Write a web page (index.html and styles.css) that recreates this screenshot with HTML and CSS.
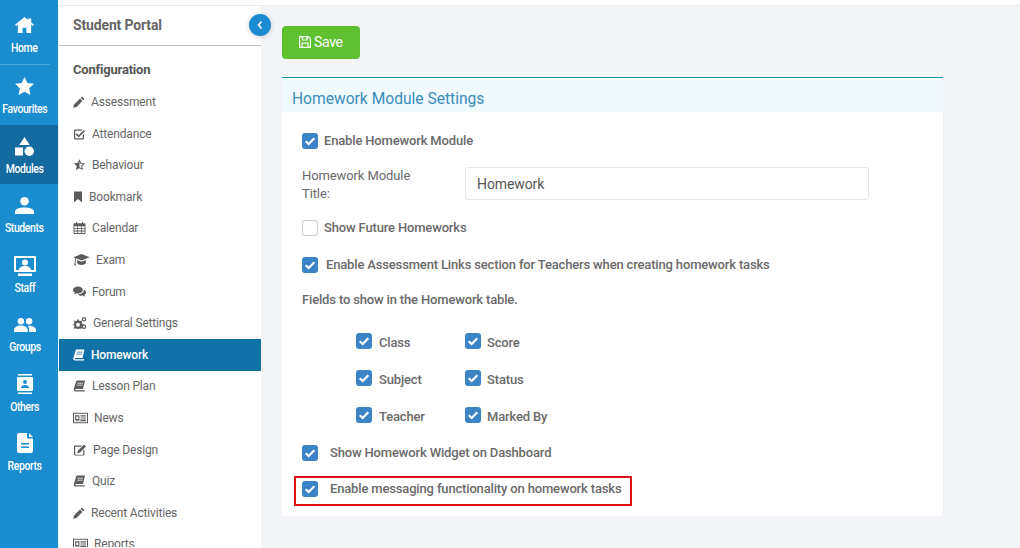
FILE: index.html
```html
<!DOCTYPE html>
<html lang="en">
<head>
<meta charset="utf-8">
<title>Homework Module Settings</title>
<link rel="stylesheet" href="styles.css">
</head>
<body>
<svg class="defs" width="0" height="0" aria-hidden="true">
  <symbol id="r-home" viewBox="0 0 20 17" preserveAspectRatio="none"><path d="M10 0 0 8.200l1.200 1.400L3 8.100V17h5v-5.500h4V17h5V8.100l1.800 1.500L20 8.200 17 5.700V1.500h-3v1.700z"/></symbol>
  <symbol id="r-star" viewBox="0 0 20 19" preserveAspectRatio="none"><path d="m10 0 3 6.300 7 .9-5.100 4.800 1.300 6.900-6.200-3.400-6.200 3.400L5.100 12 0 7.200l7-.9z"/></symbol>
  <symbol id="r-shapes" viewBox="0 0 20 20" preserveAspectRatio="none"><path d="M10 0l5.500 8.500h-11z"/><rect x="0" y="11" width="8.500" height="8.500"/><circle cx="15" cy="15" r="5"/></symbol>
  <symbol id="r-user" viewBox="0 0 20 18" preserveAspectRatio="none"><circle cx="10" cy="4.500" r="4.500"/><path d="M0 18v-2.500C0 12.500 4.500 11 10 11s10 1.500 10 4.500V18z"/></symbol>
  <symbol id="r-staff" viewBox="0 0 22 20" preserveAspectRatio="none"><path fill-rule="evenodd" d="M1 0h20a1 1 0 0 1 1 1v14a1 1 0 0 1-1 1H1a1 1 0 0 1-1-1V1a1 1 0 0 1 1-1zm1 2v12h18V2z"/><circle cx="11" cy="6.500" r="3"/><path d="M5 14c0-3 3-4 6-4s6 1 6 4zM4 17.500h14V20H4z"/></symbol>
  <symbol id="r-users" viewBox="0 0 24 15" preserveAspectRatio="none"><circle cx="7.500" cy="3.500" r="3.500"/><circle cx="16.500" cy="3.500" r="3.500"/><path d="M0 15v-2c0-3 3.500-5 7.500-5s7.500 2 7.500 5v2zM16.500 15v-2.500c0-1.500-.6-2.800-1.700-3.800.6-.3 1.200-.4 1.900-.4 4 0 7.300 2 7.300 4.700v2z"/></symbol>
  <symbol id="r-contact" viewBox="0 0 16 20" preserveAspectRatio="none"><path fill-rule="evenodd" d="M1 0h14v1.500H1zM1 18.500h14V20H1zM1 3h14a1 1 0 0 1 1 1v12a1 1 0 0 1-1 1H1a1 1 0 0 1-1-1V4a1 1 0 0 1 1-1zm7 3a2 2 0 1 0 0 4 2 2 0 0 0 0-4zm-4 8h8c0-2-2-3-4-3s-4 1-4 3z"/></symbol>
  <symbol id="r-file" viewBox="0 0 16 20" preserveAspectRatio="none"><path fill-rule="evenodd" d="M2 0h8v5.500h6V18a2 2 0 0 1-2 2H2a2 2 0 0 1-2-2V2a2 2 0 0 1 2-2zm10 0 4 4h-4zM4 10v1.500h8V10zm0 3.500V15h8v-1.500z"/></symbol>
  <symbol id="s-pencil" viewBox="0 0 12 12"><path d="M9 .6 11.400 3l-1.300 1.300-2.400-2.400zM7 2.600 9.400 5 3.500 10.900.2 11.800l.9-3.300z"/></symbol>
  <symbol id="s-check" viewBox="0 0 12 12"><path fill-rule="evenodd" d="M1.500 1.500h7.700L8 2.700H1.700v7.600h7.600V7.200l1.200-1.200v4.500a1 1 0 0 1-1 1h-8a1 1 0 0 1-1-1v-8a1 1 0 0 1 1-1z"/><path d="M3.200 5.200 5.200 7.200 10.300 2l1.200 1.300-6.300 6.300L2 6.400z"/></symbol>
  <symbol id="s-star" viewBox="0 0 12 12"><path fill-rule="evenodd" d="M6 .3 7.700 3.800l3.900.6-2.800 2.700.7 3.900L6 9.200 2.500 11l.7-3.900L.4 4.400l3.900-.6zM6 2.800v5.400l2.200 1.100-.4-2.500 1.800-1.700-2.400-.4z"/></symbol>
  <symbol id="s-bookmark" viewBox="0 0 9 12"><path d="M.5.500h8v11L4.500 8 .5 11.500z"/></symbol>
  <symbol id="s-cal" viewBox="0 0 12 12"><path fill-rule="evenodd" d="M2.500 0h1v1.200h5V0h1v1.200h1.500a1 1 0 0 1 1 1V11a1 1 0 0 1-1 1H1a1 1 0 0 1-1-1V2.200a1 1 0 0 1 1-1h1.500zM.9 4.200v1.800h2.700V4.200zm3.500 0v1.800h3.200V4.200zm4 0v1.800h2.700V4.200zM.9 6.800v1.800h2.700V6.800zm3.500 0v1.800h3.200V6.800zm4 0v1.800h2.700V6.800zM.9 9.400v1.700h2.700V9.400zm3.500 0v1.700h3.200V9.400zm4 0v1.700h2.700V9.400z"/></symbol>
  <symbol id="s-cap" viewBox="0 0 15 11"><path d="M7.500 0 15 3 7.500 6 2.500 4 2 7.500l.4 3H.8L1.300 7.500l.4-3.800L0 3z"/><path d="M3.500 5.500 7.500 7l4-1.500V8c0 1-2 2-4 2s-4-1-4-2z"/></symbol>
  <symbol id="s-comments" viewBox="0 0 12 10"><path d="M4.700 0C7 0 9 1.300 9 3.200S7 6.400 4.700 6.400c-.5 0-.9 0-1.300-.2L1 7.300l.7-1.800C.6 4.900 0 4.100 0 3.200 0 1.300 2 0 4.700 0z"/><path d="M10 2.800c1.200.6 2 1.500 2 2.600 0 .9-.6 1.700-1.400 2.200l.6 1.700-2.200-1c-1.800.4-3.600-.1-4.500-1 3.300 0 6-1.800 5.500-4.500z"/></symbol>
  <symbol id="s-cogs" viewBox="0 0 13 12"><path fill-rule="evenodd" d="M3.700 2.500h1.600l.3 1.200.9.400 1.100-.6 1.100 1.100-.6 1.100.4.900 1.200.3v1.600l-1.200.3-.4.9.6 1.100-1.100 1.100-1.100-.6-.9.400-.3 1.100H3.700l-.3-1.100-.9-.4-1.100.6L.3 10.800l.6-1.100-.4-.9L0 8.500V6.900l.5-.2.4-.9-.6-1.100 1.100-1.100 1.100.6.900-.4zm.8 3.200a2 2 0 1 0 0 4 2 2 0 0 0 0-4z"/><path fill-rule="evenodd" d="M10.500 0a2 2 0 1 1 0 4.500 2 2 0 0 1 0-4.500zm0 1.200a1 1 0 1 0 0 2 1 1 0 0 0 0-2zM10.500 7.500a2 2 0 1 1 0 4.500 2 2 0 0 1 0-4.500zm0 1.200a1 1 0 1 0 0 2 1 1 0 0 0 0-2z"/></symbol>
  <symbol id="s-book" viewBox="0 0 12 12"><path fill-rule="evenodd" d="M3 .5h8.500L9.500 9H2.400c-.7 0-.8 1.300 0 1.300h8.900l-.3 1.200H2c-1.500 0-2-1.400-1.600-3zm1 2.200-.2.8h5.600l.2-.8zm-.4 2-.2.8h5.600l.2-.8z"/></symbol>
  <symbol id="s-news" viewBox="0 0 14 11"><path fill-rule="evenodd" d="M0 .5h14v10H0zm1 1v8h12v-8zM2 3h4v4.500H2zm1 1v2.500h2V4zm4-1h5v1H7zm0 2h5v1H7zm0 2h5v1H7zM2 8h10v.6H2z"/></symbol>
  <symbol id="s-edit" viewBox="0 0 13 12"><path fill-rule="evenodd" d="M1.500 1.500h7L7.300 2.700H1.700v8h8V6.500l1.200-1.200v5.200a1 1 0 0 1-1 1h-8.400a1 1 0 0 1-1-1v-8a1 1 0 0 1 1-1z"/><path d="M10.500.5 12.500 2.500 6.300 8.700 3.800 9.200l.5-2.500z"/></symbol>
  <symbol id="s-save" viewBox="0 0 12 12"><path fill-rule="evenodd" d="M1 0h8.500L12 2.500V11a1 1 0 0 1-1 1H1a1 1 0 0 1-1-1V1a1 1 0 0 1 1-1zm.2 1.200v9.600h1.300V6.500h7v4.300h1.300V3L9 1.200h-.2v3.300H2.800V1.200zm2.500 6.500v3.100h4.600V7.700zM4 1.200v2.200h3.500V1.200z"/></symbol>
  <symbol id="tick" viewBox="0 0 16 16"><path d="M3.700 8.200 6.700 11 12.300 5.200" fill="none" stroke="#fff" stroke-width="2.100"/></symbol>
</svg>

<nav class="rail">
  <a class="rail-item rail-home"><svg class="ri ri-home"><use href="#r-home"/></svg><span>Home</span></a>
  <a class="rail-item"><svg class="ri ri-star"><use href="#r-star"/></svg><span>Favourites</span></a>
  <a class="rail-item is-active"><svg class="ri ri-shapes"><use href="#r-shapes"/></svg><span>Modules</span></a>
  <a class="rail-item"><svg class="ri ri-user"><use href="#r-user"/></svg><span>Students</span></a>
  <a class="rail-item"><svg class="ri ri-staff"><use href="#r-staff"/></svg><span>Staff</span></a>
  <a class="rail-item"><svg class="ri ri-users"><use href="#r-users"/></svg><span>Groups</span></a>
  <a class="rail-item"><svg class="ri ri-contact"><use href="#r-contact"/></svg><span>Others</span></a>
  <a class="rail-item"><svg class="ri ri-contact"><use href="#r-file"/></svg><span>Reports</span></a>
</nav>

<div class="shell">
  <div class="topstrip"></div>
  <div class="columns">
    <aside class="side">
      <div class="side-head">Student Portal</div>
      <button class="collapse" type="button" aria-label="Collapse"><svg viewBox="0 0 8 10" class="chev"><path d="M5.500 1.500 2.500 5l3 3.500" fill="none" stroke="#fff" stroke-width="1.500"/></svg></button>
      <div class="side-title">Configuration</div>
      <ul class="menu">
        <li class="mi"><svg class="si w12"><use href="#s-pencil"/></svg>Assessment</li>
        <li class="mi"><svg class="si w13"><use href="#s-check"/></svg>Attendance</li>
        <li class="mi"><svg class="si w13"><use href="#s-star"/></svg>Behaviour</li>
        <li class="mi"><svg class="si w10"><use href="#s-bookmark"/></svg>Bookmark</li>
        <li class="mi"><svg class="si w13"><use href="#s-cal"/></svg>Calendar</li>
        <li class="mi"><svg class="si w17"><use href="#s-cap"/></svg>Exam</li>
        <li class="mi"><svg class="si w13"><use href="#s-comments"/></svg>Forum</li>
        <li class="mi"><svg class="si w14"><use href="#s-cogs"/></svg>General Settings</li>
        <li class="mi is-on"><svg class="si w12"><use href="#s-book"/></svg>Homework</li>
        <li class="mi"><svg class="si w13"><use href="#s-book"/></svg>Lesson Plan</li>
        <li class="mi"><svg class="si w15"><use href="#s-news"/></svg>News</li>
        <li class="mi"><svg class="si w14"><use href="#s-edit"/></svg>Page Design</li>
        <li class="mi"><svg class="si w13"><use href="#s-book"/></svg>Quiz</li>
        <li class="mi"><svg class="si w12"><use href="#s-pencil"/></svg>Recent Activities</li>
        <li class="mi"><svg class="si w15"><use href="#s-news"/></svg>Reports</li>
      </ul>
    </aside>

    <main class="main">
      <button class="save" type="button"><svg class="save-ico"><use href="#s-save"/></svg>Save</button>
      <section class="panel">
        <h2 class="panel-title">Homework Module Settings</h2>
        <div class="panel-body">
          <label class="check row-a"><span class="box on"><svg><use href="#tick"/></svg></span>Enable Homework Module</label>
          <div class="field">
            <div class="field-label">Homework Module<br>Title:</div>
            <div class="input">Homework</div>
          </div>
          <label class="check row-b"><span class="box"></span>Show Future Homeworks</label>
          <label class="check row-c gap8"><span class="box on"><svg><use href="#tick"/></svg></span>Enable Assessment Links section for Teachers when creating homework tasks</label>
          <div class="fields-title">Fields to show in the Homework table.</div>
          <div class="grid">
            <label class="check cell"><span class="box on up"><svg><use href="#tick"/></svg></span>Class</label>
            <label class="check cell"><span class="box on up"><svg><use href="#tick"/></svg></span>Score</label>
            <label class="check cell"><span class="box on up"><svg><use href="#tick"/></svg></span>Subject</label>
            <label class="check cell"><span class="box on up"><svg><use href="#tick"/></svg></span>Status</label>
            <label class="check cell"><span class="box on up"><svg><use href="#tick"/></svg></span>Teacher</label>
            <label class="check cell"><span class="box on up"><svg><use href="#tick"/></svg></span>Marked By</label>
          </div>
          <label class="check row-d gap12"><span class="box on"><svg><use href="#tick"/></svg></span>Show Homework Widget on Dashboard</label>
          <label class="check highlight gap12"><span class="box on"><svg><use href="#tick"/></svg></span>Enable messaging functionality on homework tasks</label>
        </div>
      </section>
    </main>
  </div>
</div>
</body>
</html>
```

FILE: styles.css
```css
* { box-sizing: border-box; }
html, body { margin: 0; height: 548px; overflow: hidden; }
body { display: flex; font-family: Roboto, "Liberation Sans", sans-serif; background: #f2f4f8; color: #666; }
.defs { position: absolute; }

/* left rail */
.rail { width: 58px; flex: none; height: 548px; background: #1a8cd0; display: flex; flex-direction: column; padding: 5px 0 0; }
.rail-item { height: 59.600px; display: flex; flex-direction: column; align-items: center; justify-content: flex-end; padding: 0 9px 8.700px 0; color: #fff; font-size: 12px; font-weight: 500; letter-spacing: -.45px; line-height: 14px; }
.rail-item span { white-space: nowrap; transform: scaleX(.87); }
.rail-home { height: 60px; padding-bottom: 10px; background: linear-gradient(#4aa6dc, #4aa6dc) no-repeat 0 100% / 50px 1px; }
.is-active { background: #14699f; }
.ri { fill: #fff; display: block; flex: none; }
.ri-home { width: 19px; height: 16px; margin-bottom: 8px; }
.ri-star { width: 19px; height: 18px; margin-bottom: 7px; }
.ri-shapes { width: 19px; height: 19px; margin-bottom: 6px; }
.ri-user { width: 19px; height: 17px; margin-bottom: 7px; }
.ri-staff { width: 22px; height: 20px; margin-bottom: 5px; }
.ri-users { width: 22px; height: 14px; margin-bottom: 8px; }
.ri-contact { width: 16px; height: 20px; margin-bottom: 6px; }

/* shell */
.shell { flex: 1; min-width: 0; display: flex; flex-direction: column; }
.topstrip { height: 6px; background: #fff; border-bottom: 1px solid #e6e8ec; flex: none; }
.columns { display: flex; flex: 1; min-height: 0; }

/* sidebar */
.side { width: 203px; flex: none; background: #fff; position: relative; border-left: 1px solid #e8f8fd; }
.side-head { height: 40px; border-bottom: 1px solid #bdbdbd; padding: 11px 0 0 14px; font-size: 14px; font-weight: 700; line-height: 16px; letter-spacing: -.15px; color: #666; }
.collapse { position: absolute; top: 8px; right: -10px; width: 22px; height: 22px; border: 0; padding: 0; border-radius: 50%; background: #1b8ad0; box-shadow: 0 1px 5px rgba(0,0,0,.2); display: flex; align-items: center; justify-content: center; z-index: 2; }
.chev { width: 8px; height: 10px; }
.side-title { padding: 16px 0 0 14px; font-size: 13px; font-weight: 700; line-height: 16px; letter-spacing: -.2px; color: #555; height: 40.200px; }
.menu { list-style: none; margin: 0; padding: 0; height: 461px; overflow: hidden; }
.mi { height: 31.600px; display: flex; align-items: center; padding-left: 14px; font-size: 12px; letter-spacing: -.17px; color: #666; }
.si { height: 12px; flex: none; margin-right: 6px; fill: #5c5c5c; }
.w10 { width: 10px; } .w12 { width: 12px; } .w13 { width: 13px; } .w14 { width: 14px; } .w15 { width: 15px; } .w17 { width: 17px; }
.is-on { background: #1172a8; color: #fff; font-weight: 500; }
.is-on .si { fill: #fff; }

/* main */
.main { flex: 1; min-width: 0; padding: 20px 77px 0 21px; }
.save { display: flex; align-items: center; width: 78px; height: 33px; border: 0; border-radius: 4px; background: #5fc12f; color: #fff; font: 400 14px Roboto, sans-serif; letter-spacing: -.3px; padding: 0 0 2px 17px; }
.save-ico { width: 12px; height: 12px; fill: #fff; margin-right: 3px; }
.panel { margin-top: 18px; background: #fff; border-top: 1px solid #1d93b0; height: 439px; }
.panel-title { margin: 0; height: 34px; background: #f0f9fd; color: #3a8dbd; font-size: 15.600px; font-weight: 400; line-height: 20px; padding: 11px 0 0 10px; }
.panel-body { padding: 21px 0 0 20px; display: flex; flex-direction: column; align-items: flex-start; }

.check { display: flex; align-items: center; gap: 6px; font-size: 13px; font-weight: 500; color: #6a6a6a; line-height: 16px; letter-spacing: -.16px; white-space: nowrap; }
.gap8 { gap: 8px; }
.gap12 { gap: 12px; }
.box { width: 16px; height: 16px; flex: none; border-radius: 3px; background: #fff; border: 1px solid #ccc; }
.box.on { background: #3b84c6; border: 0; }
.box svg { display: block; width: 16px; height: 16px; }
.up { position: relative; top: -2px; }

.field { display: flex; margin-top: 18px; }
.field-label { width: 163px; font-size: 13px; line-height: 18px; letter-spacing: -.1px; color: #6a6a6a; }
.input { width: 404px; height: 33px; background: #fff; border: 1px solid #e6e6e6; border-radius: 3px; padding-left: 11px; font-size: 14px; line-height: 32px; color: #555; letter-spacing: -.1px; }
.row-b { margin-top: 17px; }
.row-c { margin-top: 21px; }
.fields-title { margin-top: 19px; font-size: 13px; font-weight: 500; line-height: 16px; letter-spacing: -.16px; color: #6a6a6a; }
.grid { display: grid; grid-template-columns: 109px 109px; grid-auto-rows: 37px; margin: 16px 0 0 54px; }
.cell { height: 37px; gap: 7px; }
.cell:nth-child(even) { gap: 6px; }
.row-d { margin-top: 10px; }
.highlight { width: 338px; height: 30px; margin: 15px 0 0 -8px; padding: 0 0 5px 6px; border: 2px solid #e01019; }
```
